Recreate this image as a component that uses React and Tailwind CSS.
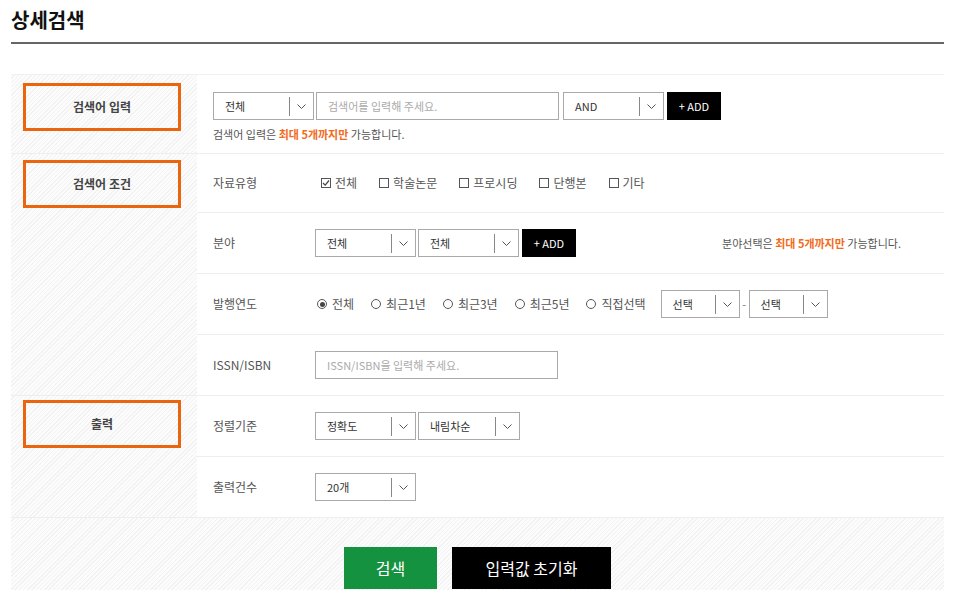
import React from 'react';

const hatch = "bg-[image:repeating-linear-gradient(135deg,#fcfcfc_0px,#fcfcfc_2px,#f2f2f2_2px,#f2f2f2_3px)]";

function Chevron() {
    return (
        <svg width="9" height="5" viewBox="0 0 9 5">
            <path d="M0.5 0.5 L4.5 4.5 L8.5 0.5" fill="none" stroke="#555" strokeWidth="1" />
        </svg>
    );
}

function Select({ label, className }) {
    return (
        <div className={"flex h-[28px] items-center border border-[#a9a9a9] bg-white " + className}>
            <span className="flex-1 pl-[11px] text-[11px] text-[#333]">{label}</span>
            <div className="h-[19px] w-px bg-[#888]"></div>
            <div className="flex w-[23px] justify-center">
                <Chevron />
            </div>
        </div>
    );
}

function AddButton({ className }) {
    return (
        <button className={"h-[28px] w-[54px] bg-black text-[11px] text-white " + className}>+ ADD</button>
    );
}

function Checkbox({ label, checked }) {
    return (
        <label className="flex items-center gap-[4px] text-[12px] text-[#555]">
            <span className="flex h-[10px] w-[10px] items-center justify-center border border-[#555] bg-white">
                {checked && (
                    <svg width="8" height="8" viewBox="0 0 8 8">
                        <path d="M1 4 L3.2 6.2 L7 1.5" fill="none" stroke="#444" strokeWidth="1.2" />
                    </svg>
                )}
            </span>
            {label}
        </label>
    );
}

function Radio({ label, checked }) {
    return (
        <label className="flex items-center gap-[5px] text-[12px] text-[#555]">
            <span className="flex h-[10px] w-[10px] items-center justify-center rounded-full border border-[#555] bg-white">
                {checked && <span className="h-[5px] w-[5px] rounded-full bg-[#444]"></span>}
            </span>
            {label}
        </label>
    );
}

function SectionLabel({ text, top }) {
    return (
        <div className={"w-[186px] shrink-0 px-[12px] " + hatch + " " + top}>
            <div className="flex h-[48px] w-[158px] items-center justify-center border-[3px] border-[#ea650d] text-[12px] font-bold text-[#444]">
                {text}
            </div>
        </div>
    );
}

function Row({ label, children, last, h }) {
    return (
        <div className={"flex items-center pl-[16px] " + (h || "h-[61px]") + (last ? "" : " border-b border-[#eeeeee]")}>
            <div className="w-[102px] shrink-0 text-[12px] text-[#555]">{label}</div>
            {children}
        </div>
    );
}

export default function App() {
    return (
        <div className="min-h-screen bg-white font-['Noto_Sans_CJK_KR',sans-serif]">
            <div className="ml-[11px] w-[933px]">
                {/* title */}
                <div className="flex h-[44px] items-center border-b-2 border-[#666] pb-[2px]">
                    <h1 className="text-[20px] font-bold text-[#111]">상세검색</h1>
                </div>

                <div className="mt-[30px] border-t border-[#f0f0f0]">
                    {/* 검색어 입력 */}
                    <div className="flex border-b border-[#eeeeee]">
                        <SectionLabel text="검색어 입력" top="pt-[8px]" />
                        <div className="h-[78px] flex-1 bg-white pl-[16px] pt-[17px]">
                            <div className="flex items-center">
                                <Select label="전체" className="w-[101px]" />
                                <input
                                    className="ml-[2px] h-[28px] w-[243px] border border-[#a9a9a9] px-[11px] text-[11px] text-[#333] placeholder:text-[#aaa] outline-none"
                                    placeholder="검색어를 입력해 주세요."
                                />
                                <Select label="AND" className="ml-[4px] w-[101px]" />
                                <AddButton className="ml-[3px]" />
                            </div>
                            <p className="mt-[6px] text-[11px] leading-[16px] text-[#555]">
                                검색어 입력은 <span className="font-bold text-[#f26a1b]">최대 5개까지만</span> 가능합니다.
                            </p>
                        </div>
                    </div>

                    {/* 검색어 조건 */}
                    <div className="flex border-b border-[#eeeeee]">
                        <SectionLabel text="검색어 조건" top="pt-[6px]" />
                        <div className="flex-1 bg-white">
                            <Row label="자료유형" h="h-[59px]">
                                <div className="ml-[6px] flex items-center gap-[22px]">
                                    <Checkbox label="전체" checked />
                                    <Checkbox label="학술논문" />
                                    <Checkbox label="프로시딩" />
                                    <Checkbox label="단행본" />
                                    <Checkbox label="기타" />
                                </div>
                            </Row>
                            <Row label="분야">
                                <div className="flex items-center">
                                    <Select label="전체" className="w-[101px]" />
                                    <Select label="전체" className="ml-[2px] w-[101px]" />
                                    <AddButton className="ml-[3px]" />
                                </div>
                                <p className="ml-auto pr-[43px] text-[11px] text-[#555]">
                                    분야선택은 <span className="font-bold text-[#f26a1b]">최대 5개까지만</span> 가능합니다.
                                </p>
                            </Row>
                            <Row label="발행연도">
                                <div className="ml-[2px] flex items-center gap-[17px]">
                                    <Radio label="전체" checked />
                                    <Radio label="최근1년" />
                                    <Radio label="최근3년" />
                                    <Radio label="최근5년" />
                                    <Radio label="직접선택" />
                                </div>
                                <div className="ml-[15px] flex items-center">
                                    <Select label="선택" className="w-[79px]" />
                                    <span className="w-[9px] text-center text-[11px] text-[#777]">-</span>
                                    <Select label="선택" className="w-[79px]" />
                                </div>
                            </Row>
                            <Row label="ISSN/ISBN" h="h-[60px]" last>
                                <input
                                    className="h-[28px] w-[243px] border border-[#a9a9a9] px-[11px] text-[11px] text-[#333] placeholder:text-[#aaa] outline-none"
                                    placeholder="ISSN/ISBN을 입력해 주세요."
                                />
                            </Row>
                        </div>
                    </div>

                    {/* 출력 */}
                    <div className="flex border-b border-[#eeeeee]">
                        <SectionLabel text="출력" top="pt-[4px]" />
                        <div className="flex-1 bg-white">
                            <Row label="정렬기준">
                                <Select label="정확도" className="w-[101px]" />
                                <Select label="내림차순" className="ml-[2px] w-[102px]" />
                            </Row>
                            <Row label="출력건수" h="h-[60px]" last>
                                <Select label="20개" className="w-[101px]" />
                            </Row>
                        </div>
                    </div>

                    {/* buttons */}
                    <div className={"flex h-[72px] justify-center gap-[15px] pt-[29px] " + hatch}>
                        <button className="h-[42px] w-[93px] bg-[#14923f] text-[16px] text-white">검색</button>
                        <button className="h-[42px] w-[159px] bg-black text-[16px] text-white">입력값 초기화</button>
                    </div>
                </div>
            </div>
        </div>
    );
}
